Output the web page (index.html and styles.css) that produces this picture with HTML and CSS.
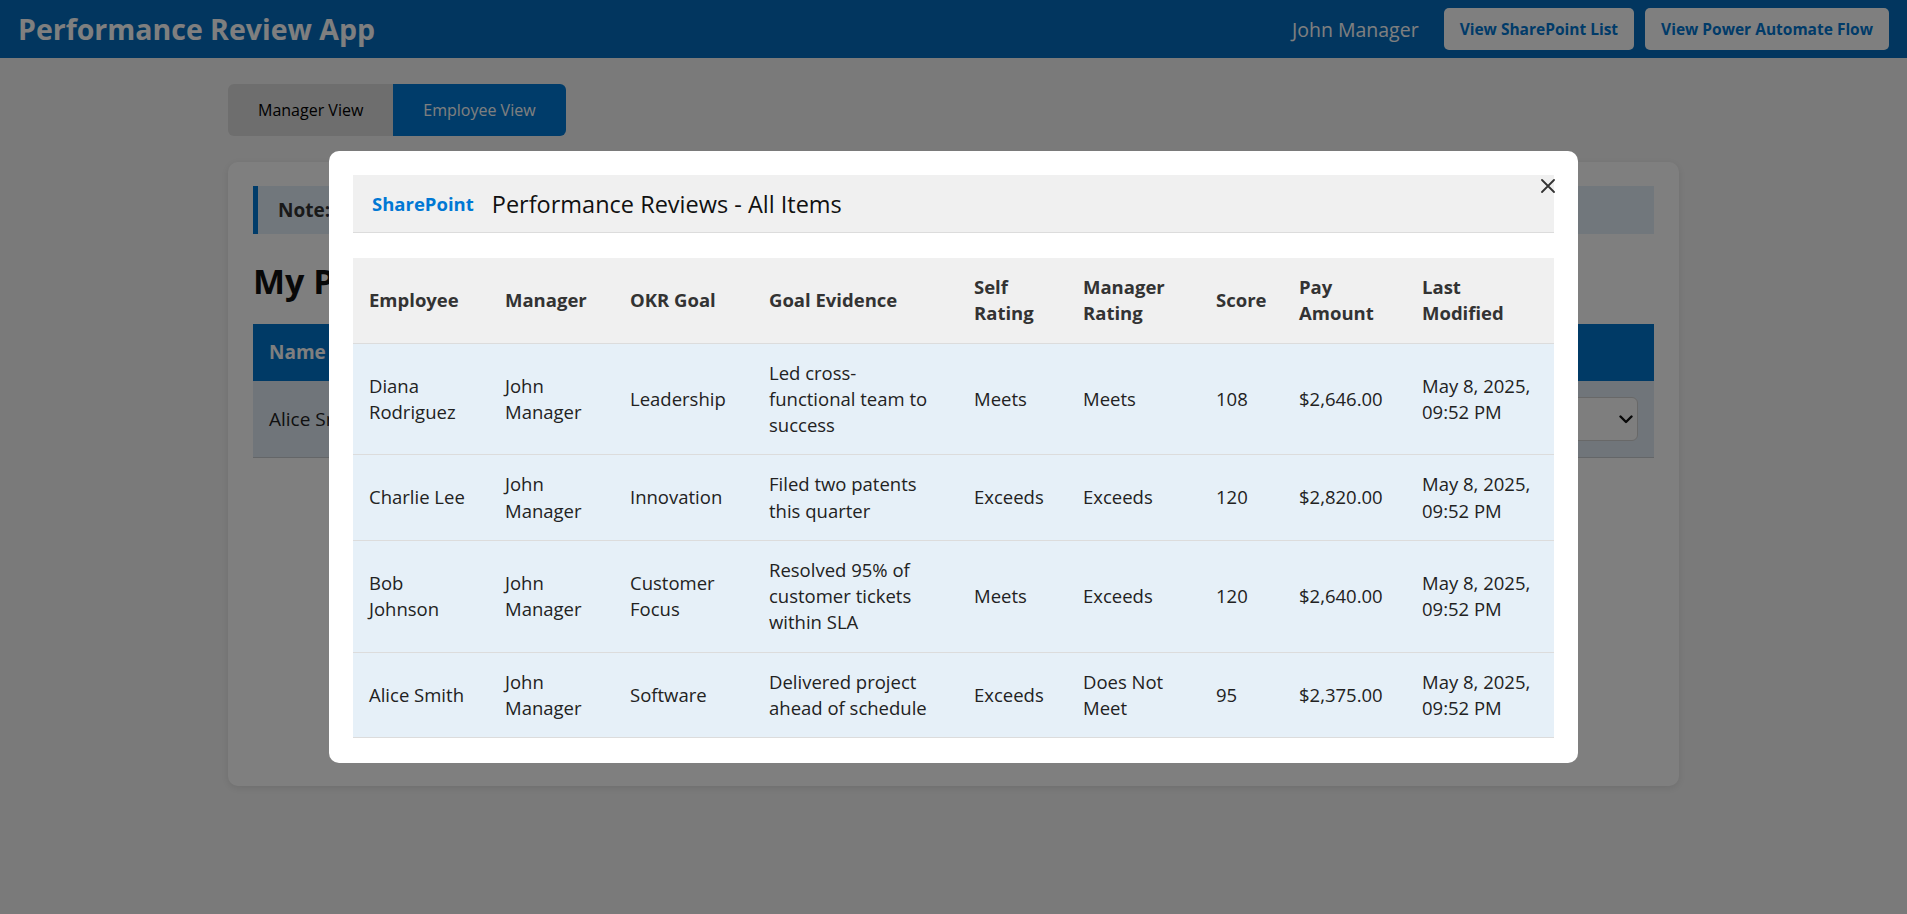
FILE: index.html
```html
<!DOCTYPE html>
<html lang="en">
<head>
<meta charset="utf-8">
<title>Performance Review App</title>
<link rel="stylesheet" href="styles.css">
</head>
<body>
<header class="topbar">
  <h1 class="app-title">Performance Review App</h1>
  <div class="topbar-right">
    <span class="user">John Manager</span>
    <button class="top-btn">View SharePoint List</button>
    <button class="top-btn">View Power Automate Flow</button>
  </div>
</header>

<main class="container">
  <div class="tabs">
    <button class="tab">Manager View</button>
    <button class="tab active">Employee View</button>
  </div>

  <section class="card">
    <div class="note"><strong>Note:</strong> Submit your self rating for each goal. Your manager will review it.</div>
    <h2 class="section-title">My Performance Reviews</h2>
    <table class="emp-table">
      <colgroup>
        <col class="c-name"><col><col><col><col class="c-action">
      </colgroup>
      <thead>
        <tr><th>Name</th><th>OKR Goal</th><th>Goal Evidence</th><th>Manager Rating</th><th>Self Rating</th></tr>
      </thead>
      <tbody>
        <tr>
          <td>Alice Smith</td>
          <td>Software</td>
          <td>Delivered project ahead of schedule</td>
          <td>Does Not Meet</td>
          <td class="action-cell">
            <span class="select-wrap">
              <select class="rating-select"><option>Exceeds</option><option>Meets</option><option>Does Not Meet</option></select>
              <svg class="chev" width="14" height="9" viewBox="0 0 14 9"><path d="M1.5 1.5 L7 7 L12.5 1.5" fill="none" stroke="#111" stroke-width="2.4" stroke-linecap="round" stroke-linejoin="round"/></svg>
            </span>
          </td>
        </tr>
      </tbody>
    </table>
  </section>
</main>

<div class="overlay">
  <div class="modal">
    <button class="close" aria-label="Close">
      <svg width="14" height="14" viewBox="0 0 14 14"><path d="M1 1 L13 13 M13 1 L1 13" stroke="#333" stroke-width="1.8" stroke-linecap="round"/></svg>
    </button>
    <div class="sp-header">
      <span class="sp-brand">SharePoint</span>
      <span class="sp-title">Performance Reviews - All Items</span>
    </div>
    <table class="sp-table">
      <colgroup>
        <col class="w1"><col class="w2"><col class="w3"><col class="w4"><col class="w5"><col class="w6"><col class="w7"><col class="w8"><col class="w9">
      </colgroup>
      <thead>
        <tr>
          <th>Employee</th><th>Manager</th><th>OKR Goal</th><th>Goal Evidence</th><th>Self Rating</th><th>Manager Rating</th><th>Score</th><th>Pay Amount</th><th>Last Modified</th>
        </tr>
      </thead>
      <tbody>
        <tr>
          <td>Diana Rodriguez</td><td>John Manager</td><td>Leadership</td><td>Led cross-functional team to success</td><td>Meets</td><td>Meets</td><td>108</td><td>$2,646.00</td><td>May 8, 2025, 09:52 PM</td>
        </tr>
        <tr>
          <td>Charlie Lee</td><td>John Manager</td><td>Innovation</td><td>Filed two patents this quarter</td><td>Exceeds</td><td>Exceeds</td><td>120</td><td>$2,820.00</td><td>May 8, 2025, 09:52 PM</td>
        </tr>
        <tr>
          <td>Bob Johnson</td><td>John Manager</td><td>Customer Focus</td><td>Resolved 95% of customer tickets within SLA</td><td>Meets</td><td>Exceeds</td><td>120</td><td>$2,640.00</td><td>May 8, 2025, 09:52 PM</td>
        </tr>
        <tr>
          <td>Alice Smith</td><td>John Manager</td><td>Software</td><td>Delivered project ahead of schedule</td><td>Exceeds</td><td>Does Not Meet</td><td>95</td><td>$2,375.00</td><td>May 8, 2025, 09:52 PM</td>
        </tr>
      </tbody>
    </table>
  </div>
</div>
</body>
</html>
```
FILE: styles.css
```css
* { box-sizing: border-box; }

body {
  margin: 0;
  font-family: "Open Sans", "Noto Sans", sans-serif;
  background: #f5f5f5;
  color: #333;
  min-height: 914px;
}

/* Top bar */
.topbar {
  height: 58px;
  background: #046cbe;
  display: flex;
  align-items: center;
  justify-content: space-between;
  padding: 0 18px;
}
.app-title {
  margin: 0;
  font-size: 28.5px;
  font-weight: 700;
  color: #fff;
  line-height: 36px;
}
.topbar-right {
  display: flex;
  align-items: center;
  gap: 11px;
}
.user {
  color: #fff;
  font-size: 19.5px;
  margin-right: 14px;
}
.top-btn {
  height: 42px;
  padding: 0 16px;
  background: #fff;
  color: #0076d2;
  border: none;
  border-radius: 5px;
  font-family: "Open Sans", sans-serif;
  font-weight: 700;
  font-size: 15.5px;
}

/* Page */
.container {
  width: 1451px;
  margin: 26px auto 0;
}
.tabs {
  display: flex;
  width: fit-content;
  border-radius: 6px;
  overflow: hidden;
  margin-bottom: 26px;
}
.tab {
  border: none;
  padding: 14px 30px;
  font-family: "Open Sans", sans-serif;
  font-size: 16px;
  line-height: 24px;
  background: #dcdcdc;
  color: #000;
}
.tab.active {
  background: #0078d4;
  color: #fff;
}

.card {
  background: #fff;
  border-radius: 10px;
  box-shadow: 0 2px 8px rgba(0, 0, 0, 0.1);
  padding: 24px 25px;
  min-height: 624px;
}
.note {
  background: #e2eef8;
  border-left: 5px solid #0078d4;
  padding: 11px 20px;
  font-size: 19px;
  line-height: 26px;
  color: #333;
}
.section-title {
  font-size: 34px;
  line-height: 41px;
  font-weight: 700;
  color: #111;
  margin: 27px 0 22px;
}

.emp-table {
  width: 100%;
  border-collapse: collapse;
  font-size: 19px;
  line-height: 25px;
}
.emp-table .c-action { width: 270px; }
.emp-table th {
  background: #0074cc;
  color: #fff;
  text-align: left;
  padding: 16px;
  font-weight: 700;
}
.emp-table td {
  background: #e0ebf5;
  color: #222;
  padding: 16px;
  border-bottom: 1px solid #c9ccd0;
}
.action-cell { text-align: right; }
.select-wrap {
  position: relative;
  display: inline-block;
  vertical-align: middle;
}
.rating-select {
  appearance: none;
  -webkit-appearance: none;
  width: 230px;
  height: 44px;
  border: 1px solid #d0d0d0;
  border-radius: 6px;
  background: #fdfdfd;
  font-family: "Open Sans", sans-serif;
  font-size: 18px;
  padding: 0 14px;
  color: #222;
}
.chev {
  position: absolute;
  right: 5px;
  top: 18px;
}

/* Modal */
.overlay {
  position: fixed;
  inset: 0;
  background: rgba(0, 0, 0, 0.5);
  display: flex;
  align-items: center;
  justify-content: center;
}
.modal {
  position: relative;
  width: 1249px;
  background: #fff;
  border-radius: 10px;
  padding: 24px 24px 25px;
}
.close {
  position: absolute;
  top: 27px;
  right: 22px;
  width: 16px;
  height: 16px;
  padding: 1px;
  border: none;
  background: none;
  display: flex;
  align-items: center;
  justify-content: center;
}
.sp-header {
  height: 58px;
  background: #f0f0f0;
  border-bottom: 1px solid #dcdcdc;
  display: flex;
  align-items: center;
  gap: 18px;
  padding: 0 19px;
  margin-bottom: 25px;
}
.sp-brand {
  font-weight: 700;
  font-size: 18.5px;
  color: #0078d4;
}
.sp-title {
  font-size: 23.5px;
  color: #111;
}

.sp-table {
  width: 100%;
  table-layout: fixed;
  border-collapse: collapse;
  font-size: 18.5px;
  line-height: 26.25px;
}
.sp-table .w1 { width: 136px; }
.sp-table .w2 { width: 125px; }
.sp-table .w3 { width: 139px; }
.sp-table .w4 { width: 205px; }
.sp-table .w5 { width: 109px; }
.sp-table .w6 { width: 133px; }
.sp-table .w7 { width: 83px; }
.sp-table .w8 { width: 123px; }
.sp-table .w9 { width: 148px; }
.sp-table th {
  background: #f0f0f0;
  color: #333;
  font-weight: 700;
  text-align: left;
  padding: 16px;
  border-bottom: 1px solid #dcdcdc;
}
.sp-table td {
  background: #e6f0f8;
  color: #222;
  padding: 16px;
  border-bottom: 1px solid #dcdcdc;
}
```
